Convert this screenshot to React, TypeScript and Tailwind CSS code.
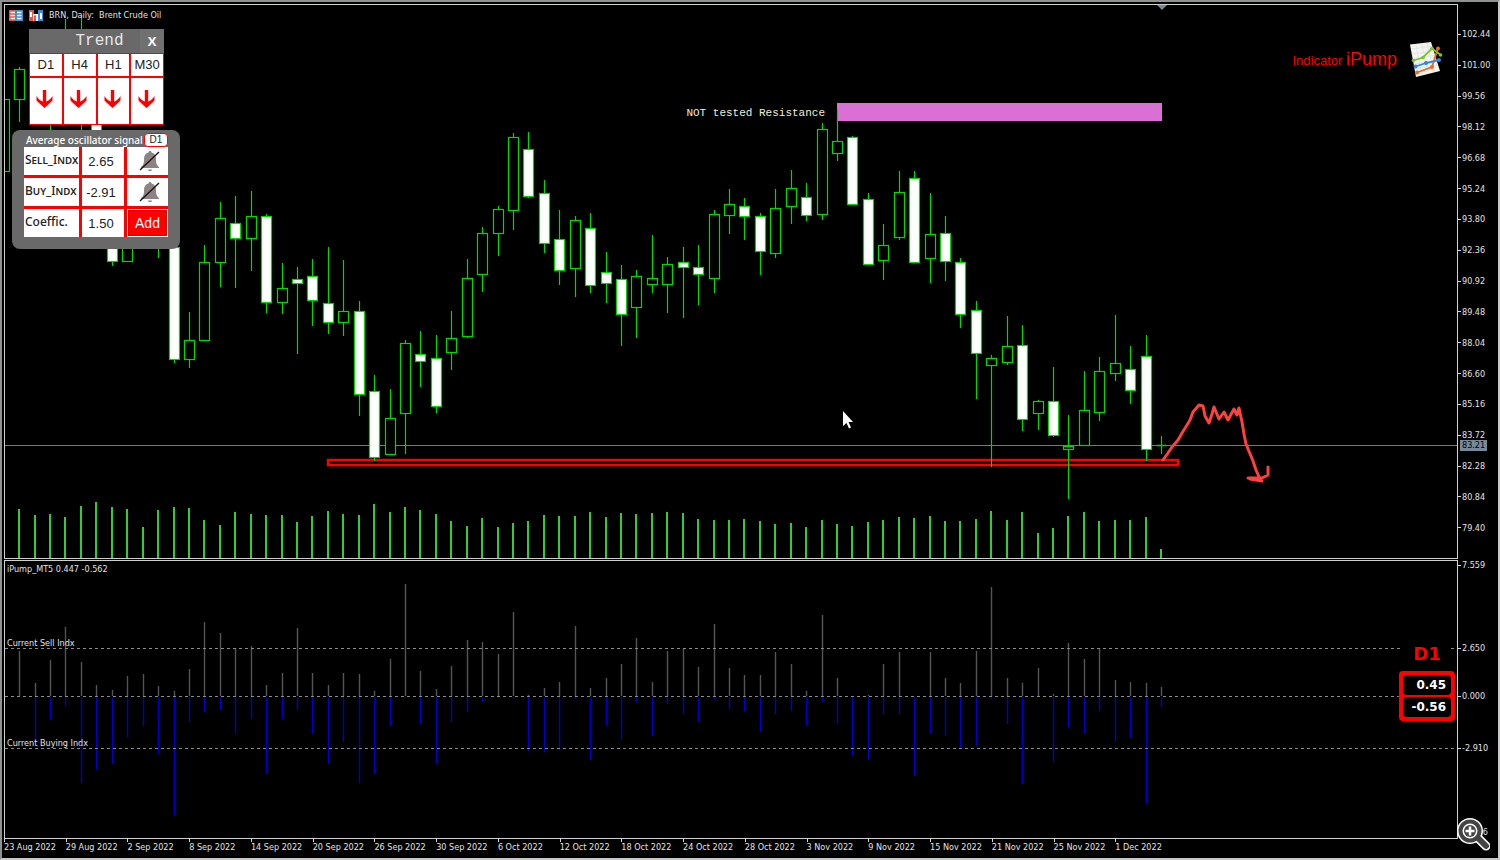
import { useState } from "react";

type Candle = {
  up: boolean;
  high: number;
  top: number;
  bottom: number;
  low: number;
};

const FIRST_X = 19.7;
const STEP = 15.43;

const barX = (i: number) => Math.floor(FIRST_X + i * STEP) + 0.5;

// [index, up, high, top, bottom, low]
const RAW: [number, number, number, number, number, number][] = [
  [-1, 1, 99, 99, 171, 171],
  [0, 1, 67, 69, 99, 122],
  [2, 1, 90, 95, 110, 130],
  [3, 1, 19, 60, 90, 110],
  [4, 0, 15, 60, 90, 131],
  [5, 0, 60, 70, 150, 160],
  [6, 0, 200, 210, 261, 266],
  [7, 1, 200, 210, 261, 261],
  [9, 1, 200, 210, 230, 258],
  [10, 0, 240, 247, 359, 363],
  [11, 1, 312, 340, 359, 368],
  [12, 1, 245, 262, 340, 341],
  [13, 1, 202, 218, 262, 287],
  [14, 0, 196, 223, 238, 288],
  [15, 1, 191, 216, 238, 271],
  [16, 0, 214, 216, 302, 313],
  [17, 1, 263, 288, 302, 314],
  [18, 0, 267, 279, 283, 354],
  [19, 0, 259, 276, 300, 326],
  [20, 0, 247, 303, 322, 334],
  [21, 1, 260, 311, 322, 336],
  [22, 0, 301, 311, 394, 416],
  [23, 0, 375, 391, 457, 461],
  [24, 1, 389, 418, 454, 455],
  [25, 1, 340, 343, 413, 454],
  [26, 0, 331, 354, 361, 387],
  [27, 0, 335, 358, 406, 413],
  [28, 1, 311, 338, 352, 370],
  [29, 1, 259, 278, 336, 338],
  [30, 1, 227, 233, 274, 292],
  [31, 1, 206, 209, 233, 256],
  [32, 1, 133, 137, 210, 230],
  [33, 0, 132, 149, 196, 198],
  [34, 0, 180, 193, 243, 253],
  [35, 0, 210, 239, 270, 285],
  [36, 1, 216, 220, 268, 297],
  [37, 0, 213, 228, 285, 293],
  [38, 0, 252, 272, 283, 303],
  [39, 0, 265, 279, 314, 346],
  [40, 1, 270, 276, 307, 338],
  [41, 1, 235, 278, 284, 293],
  [42, 1, 257, 264, 284, 313],
  [43, 0, 247, 262, 267, 318],
  [44, 0, 245, 267, 274, 305],
  [45, 1, 210, 214, 278, 293],
  [46, 1, 189, 204, 215, 234],
  [47, 0, 198, 206, 216, 240],
  [48, 0, 213, 216, 251, 275],
  [49, 1, 189, 208, 253, 258],
  [50, 1, 170, 188, 206, 224],
  [51, 0, 183, 197, 215, 221],
  [52, 1, 123, 129, 214, 220],
  [53, 1, 109, 141, 153, 161],
  [54, 0, 136, 137, 204, 205],
  [55, 0, 193, 199, 264, 265],
  [56, 1, 224, 245, 260, 280],
  [57, 1, 171, 192, 237, 240],
  [58, 0, 171, 178, 262, 263],
  [59, 1, 193, 234, 258, 283],
  [60, 0, 216, 233, 261, 281],
  [61, 0, 258, 262, 314, 328],
  [62, 0, 301, 310, 353, 399],
  [63, 1, 355, 358, 365, 467],
  [64, 1, 316, 346, 362, 365],
  [65, 0, 325, 345, 419, 431],
  [66, 1, 400, 401, 413, 430],
  [67, 0, 367, 401, 435, 437],
  [68, 1, 415, 446, 449, 499],
  [69, 1, 371, 410, 445, 446],
  [70, 1, 357, 371, 412, 421],
  [71, 1, 315, 363, 373, 381],
  [72, 0, 346, 369, 390, 404],
  [73, 0, 335, 356, 449, 461],
  [74, 1, 436, 445, 445, 454],
];

const CANDLES: [number, Candle][] = RAW.map(([i, up, high, top, bottom, low]) => [
  i,
  { up: up === 1, high, top, bottom, low },
]);

const VOLUMES = [
  509, 515, 514, 517, 506, 502, 507, 509, 527, 510, 507, 508, 520, 525, 512, 514, 515, 515, 522,
  516, 511, 514, 515, 504, 512, 507, 510, 514, 521, 526, 518, 527, 523, 521, 515, 516, 516, 512,
  517, 513, 514, 513, 512, 513, 519, 520, 520, 519, 521, 524, 523, 527, 520, 524, 526, 522, 520,
  517, 518, 516, 521, 521, 519, 511, 520, 512, 533, 528, 516, 512, 521, 520, 520, 517, 549,
];

const SELL = [
  651, 683, 660, 627, 662, 685, 690, 676, 674, 686, 691, 669, 622, 633, 648, 646, 685, 673, 628,
  673, 685, 673, 674, 691, 659, 584, 671, 689, 666, 640, 642, 654, 612, 695, 688, 682, 626, 688,
  678, 664, 638, 682, 651, 648, 667, 624, 668, 675, 675, 652, 664, 691, 615, 678, 696, 695, 664,
  652, 696, 652, 678, 683, 651, 587, 678, 683, 668, 694, 643, 659, 648, 680, 682, 683, 687,
];

const BUY = [
  698, 741, 719, 706, 783, 769, 764, 737, 726, 754, 815, 722, 712, 710, 733, 719, 774, 719, 710,
  734, 764, 742, 783, 774, 726, 698, 724, 764, 722, 712, 702, 698, 699, 751, 752, 750, 699, 760,
  725, 740, 702, 736, 704, 714, 722, 699, 709, 711, 731, 714, 711, 725, 701, 724, 755, 759, 714,
  714, 776, 733, 736, 749, 746, 699, 724, 784, 697, 762, 727, 733, 711, 742, 738, 804, 707,
];

const PRICES = [
  "102.44", "101.00", "99.56", "98.12", "96.68", "95.24", "93.80", "92.36", "90.92",
  "89.48", "88.04", "86.60", "85.16", "83.72", "82.28", "80.84", "79.40",
];

const LEVELS = ["7.559", "2.650", "0.000", "-2.910"];

const DATES = [
  "23 Aug 2022", "29 Aug 2022", "2 Sep 2022", "8 Sep 2022", "14 Sep 2022", "20 Sep 2022",
  "26 Sep 2022", "30 Sep 2022", "6 Oct 2022", "12 Oct 2022", "18 Oct 2022", "24 Oct 2022",
  "28 Oct 2022", "3 Nov 2022", "9 Nov 2022", "15 Nov 2022", "21 Nov 2022", "25 Nov 2022",
  "1 Dec 2022",
];

function PriceChart() {
  return (
    <svg className="absolute inset-0 h-full w-full" aria-label="BRN daily candles">
      <g transform="translate(-5 -5)">
        <path d="M1157 5h10l-5 5z" fill="#778899" />
        <rect x="5" y="445" width="100%" height="1" fill="#6c7b8a" />
        <rect x="837" y="103" width="325" height="18" fill="#da70d6" />
        <rect x="328" y="460" width="850" height="5" fill="#000" stroke="#f00" strokeWidth="2.500" />
        {VOLUMES.map((y, i) => (
          <rect key={i} x={barX(i) - 1.5} y={y} width="2" height={558 - y} fill="#32cd32" />
        ))}
        {CANDLES.map(([i, c]) => (
          <g key={i} stroke="#00d800">
            <line x1={barX(i)} x2={barX(i)} y1={c.high} y2={c.low} strokeWidth="1.200" />
            {c.top === c.bottom ? (
              <line
                x1={barX(i) - 5}
                x2={barX(i) + 5}
                y1={c.top + 0.5}
                y2={c.top + 0.5}
                strokeWidth="1.500"
              />
            ) : (
              <rect
                x={barX(i) - 5}
                y={c.top + 0.5}
                width="10"
                height={c.bottom - c.top}
                fill={c.up ? "#000" : "#fff"}
                strokeWidth="1.200"
              />
            )}
          </g>
        ))}
        <text x="825" y="116" textAnchor="end" fill="#eeeedd" className="font-['Liberation_Mono',monospace] text-[11px]">
          NOT tested Resistance
        </text>
        <path
          d="M1163 460L1168 453L1172 447L1178 440L1182 433L1187 425L1190 420L1193 412L1199 405L1203 406L1205 416L1209 423L1212 414L1214 407L1219 419L1224 412L1228 420L1234 409L1237 415L1239 408L1242 422L1244 434L1246 444L1253 461L1256 470L1260 479M1248 478H1262L1268 475V467M1250 479L1262 481"
          fill="none"
          stroke="#ff4040"
          strokeWidth="3"
          strokeLinecap="round"
          strokeLinejoin="round"
        />
        <path d="M843 411v15l3.500-3 2.500 5.500 2-1-2.500-5.500h4.500z" fill="#fff" />
      </g>
    </svg>
  );
}

function OscillatorChart() {
  return (
    <svg className="absolute inset-0 h-full w-full" aria-label="iPump histogram">
      <g transform="translate(-5 -561)" strokeWidth="1.400">
        {SELL.map((y, i) => (
          <line key={i} x1={barX(i)} x2={barX(i)} y1={y} y2="696" stroke="#555" />
        ))}
        {BUY.map((y, i) => (
          <line key={i} x1={barX(i)} x2={barX(i)} y1="697" y2={y} stroke="#0000d2" />
        ))}
      </g>
      {[87.5, 135.5, 187.5].map((y) => (
        <line key={y} x1="0" x2="100%" y1={y} y2={y} stroke="#8c8c8c" strokeDasharray="3 3" />
      ))}
    </svg>
  );
}

function DownArrow() {
  return (
    <svg width="17" height="20" viewBox="0 0 17 20" fill="#f00">
      <path d="M6.800 1h3.400v11.500c2.500-.8 4.500-2.500 6.300-5.500v4.500c-2 2.500-5 4.500-8 7.500-3-3-6-5-8-7.500V7c1.800 3 3.800 4.700 6.300 5.500z" />
    </svg>
  );
}

function BellOff() {
  return (
    <svg width="22" height="22" viewBox="0 0 22 22">
      <path
        d="M11 1c1 0 1.500.7 1.500 1.500C15.500 3.200 17 5.500 17 9c0 5 1 6.500 3 8v1H2v-1c2-1.500 3-3 3-8 0-3.500 1.500-5.800 4.500-6.500C9.500 1.700 10 1 11 1z"
        fill="#8f8282"
      />
      <path d="M9 19.500h4c0 1-.8 1.500-2 1.500s-2-.5-2-1.500z" fill="#8f8282" />
      <path d="M1 20L20 2" stroke="#111" strokeWidth="1.300" />
    </svg>
  );
}

function TrendPanel() {
  return (
    <section className="ml-[24px] w-[135px]">
      <header className="flex h-6 items-center bg-[#696969]">
        <h2 className="flex-1 pl-[30px] text-center font-['Liberation_Mono',monospace] text-[16px] leading-6 text-[#e6e6e6]">
          Trend
        </h2>
        <button className="h-6 w-6 bg-[#707070] font-['Open_Sans',sans-serif] text-[13px] font-bold leading-6 text-white">
          X
        </button>
      </header>
      <div className="grid grid-cols-4">
        {["D1", "H4", "H1", "M30"].map((tf) => (
          <button
            key={tf}
            className="h-6 border border-[#f00] bg-white font-['Liberation_Sans',sans-serif] text-[13px] text-[#222]"
          >
            {tf}
          </button>
        ))}
        {["D1", "H4", "H1", "M30"].map((tf) => (
          <div
            key={tf}
            className="flex h-12 items-center justify-center border border-[#f00] bg-white pb-1 pr-[2px]"
          >
            <DownArrow />
          </div>
        ))}
      </div>
    </section>
  );
}

const FIELDS = [
  { id: "sell", label: "Sell_Indx", value: "2.65", caps: true },
  { id: "buy", label: "Buy_Indx", value: "-2.91", caps: true },
  { id: "coef", label: "Coeffic.", value: "1.50", caps: false },
];

function SignalPanel() {
  const [values, setValues] = useState<Record<string, string>>(
    Object.fromEntries(FIELDS.map((f) => [f.id, f.value])),
  );

  return (
    <section className="ml-[7px] mt-[5px] w-[168px] rounded-lg bg-[#696969] px-3 pb-3 pt-[2px]">
      <header className="flex h-[15px] items-center justify-between pl-[2px]">
        <h2 className="whitespace-nowrap font-['Noto_Sans',sans-serif] text-[10px] font-medium text-white">
          Average oscillator signal
        </h2>
        <button className="h-[14px] w-6 rounded-sm border border-[#f00] bg-white font-['Liberation_Sans',sans-serif] text-[10px] leading-3 text-[#222]">
          D1
        </button>
      </header>
      <div className="flex flex-col gap-[3px] bg-[#f00]">
        {FIELDS.map((f) => (
          <div key={f.id} className="grid h-7 grid-cols-[55px_42px_41px] gap-[3px]">
            <label
              htmlFor={f.id}
              className={
                f.caps
                  ? "bg-white pl-px font-['Noto_Sans',sans-serif] text-[12px] font-medium leading-[26px] text-[#222] [font-variant:small-caps]"
                  : "bg-white pl-px font-['Noto_Sans',sans-serif] text-[12px] font-medium leading-[26px] text-[#222]"
              }
            >
              {f.label}
            </label>
            <input
              id={f.id}
              value={values[f.id]}
              onChange={(e) => setValues({ ...values, [f.id]: e.target.value })}
              className="w-full bg-white pr-1 text-center font-['Liberation_Sans',sans-serif] text-[13px] text-[#222] outline-none"
            />
            {f.id === "coef" ? (
              <div className="bg-white p-px">
                <button className="h-full w-full border border-[#d00] bg-[#f00] font-['Liberation_Sans',sans-serif] text-[14px] text-white">
                  Add
                </button>
              </div>
            ) : (
              <button className="flex items-center justify-center bg-white pl-1" aria-label={`${f.label} alert`}>
                <BellOff />
              </button>
            )}
          </div>
        ))}
      </div>
    </section>
  );
}

function ReportIcon() {
  return (
    <svg width="34" height="38" viewBox="0 0 34 38" fill="none">
      <path d="M1 3.500L22 1l9 29L7 36z" fill="#f4f4f0" />
      <path
        d="M3 8l20-3M4 13l21-3M5 18l22-4M6 23l22-4M7 28l22-4M7 4l6 30M13 3l6 29M18 2l7 29"
        stroke="#dcdcd6"
        strokeWidth=".6"
      />
      <path d="M8 31.500L23 26l6-19" stroke="#ee6a1f" strokeWidth="1.800" />
      <path d="M6.500 25.500L17 22l13-3" stroke="#2a86f0" strokeWidth="1.800" />
      <path d="M4.500 19.500L14 16.500l9-9 8 6" stroke="#7cc623" strokeWidth="1.800" />
      <g fill="#ee6a1f">
        <circle cx="8" cy="31.500" r="2" />
        <circle cx="23" cy="26" r="2" />
        <circle cx="29" cy="7.500" r="2" />
      </g>
      <g fill="#2a86f0">
        <circle cx="6.500" cy="25.500" r="2" />
        <circle cx="17" cy="22" r="2" />
        <circle cx="30" cy="19" r="2" />
      </g>
      <g fill="#7cc623">
        <circle cx="4.500" cy="19.500" r="1.800" />
        <circle cx="14" cy="16.500" r="1.800" />
        <circle cx="23" cy="7.500" r="1.800" />
        <circle cx="31.500" cy="14" r="1.800" />
      </g>
    </svg>
  );
}

function TitleIcons() {
  return (
    <>
      <svg width="14" height="11" viewBox="0 0 14 11">
        <path d="M0 0h7v11H0z" fill="#e0574c" />
        <path d="M7 0h7v11H7z" fill="#3f8fd0" />
        <path d="M1.500 2.500h4.500M1.500 5.500h4.500M1.500 8.500h4.500M8 2.500h4.500M8 5.500h4.500M8 8.500h4.500" stroke="#fff" strokeWidth="1.400" />
      </svg>
      <svg width="14" height="11" viewBox="0 0 14 11">
        <path d="M0 0h5v11H0z" fill="#e0574c" />
        <path d="M9 0h5v11H9z" fill="#3f8fd0" />
        <path d="M4 4h5v7H4z" fill="#f4f4f4" />
        <path d="M2 2v5M12 3v6" stroke="#fff" strokeWidth="2" />
        <path d="M5 5.500h2V11H5z" fill="#e0574c" />
      </svg>
    </>
  );
}

function AxisLabel({ text }: { text: string }) {
  return (
    <div className="flex items-center gap-px">
      <span className="h-px w-[3px] bg-[#d8d8d8]" />
      {text}
    </div>
  );
}

export default function App() {
  return (
    <main className="flex h-screen flex-col border-2 border-[#8f9390] border-b-[#c8c8c8] border-r-[#c8c8c8] bg-black pl-[2px] pt-[2px] font-['DejaVu_Sans_Condensed','DejaVu_Sans',sans-serif] text-[9px] leading-[10px] text-[#e2e2e2]">
      <div className="flex min-h-0 flex-1">
        <div className="relative flex flex-1 items-start justify-between overflow-hidden border border-[#d0d0d0]">
          <PriceChart />
          <div className="relative">
            <div className="flex h-6 items-center gap-[6px] pb-1 pl-1">
              <TitleIcons />
              <h1 className="whitespace-pre">BRN, Daily:  Brent Crude Oil</h1>
            </div>
            <TrendPanel />
            <SignalPanel />
          </div>
          <div className="relative flex items-center gap-3 pr-[14px] pt-9 font-['Liberation_Sans',sans-serif] text-[#f00]">
            <p className="text-[13px] leading-5">
              Indicator <span className="text-[18px]">iPump</span>
            </p>
            <ReportIcon />
          </div>
        </div>
        <div className="relative flex w-10 flex-col pb-4 pt-[15px]">
          {PRICES.map((p) => (
            <div key={p} className="flex flex-1 items-center">
              <AxisLabel text={p} />
            </div>
          ))}
          <span className="absolute left-[2px] top-[436px] bg-[#778899] px-[2px] leading-[11px] text-black">
            83.21
          </span>
        </div>
      </div>

      <div className="mt-px flex h-[279px]">
        <div className="relative flex flex-1 justify-between overflow-hidden border border-[#d0d0d0]">
          <OscillatorChart />
          <div className="relative grid grid-rows-[74px_100px_10px] content-start pl-[2px] pt-[3px]">
            <p>iPump_MT5 0.447 -0.562</p>
            <p>Current Sell Indx</p>
            <p>Current Buying Indx</p>
          </div>
          <div className="relative mr-[2px] mt-20 w-14 self-start font-['DejaVu_Sans',sans-serif] font-bold">
            <p className="mx-1 bg-black text-center text-[18px] leading-[26px] text-[#f00]">D1</p>
            <div className="mt-1 flex flex-col gap-[2px] rounded-sm border-4 border-[#f00] bg-[#f00] text-right text-[12px] leading-5 text-white">
              <p className="rounded-sm bg-black pr-[5px]">0.45</p>
              <p className="rounded-sm bg-black pr-[5px]">-0.56</p>
            </div>
          </div>
        </div>
        <div className="relative grid w-10 grid-rows-[83px_48px_52px_84px_10px] items-start">
          {LEVELS.map((l) => (
            <AxisLabel key={l} text={l} />
          ))}
          <p className="pr-[10px] text-right">6</p>
          <button className="absolute -bottom-3 -left-1" aria-label="Zoom in">
            <svg width="36" height="36" viewBox="0 0 36 36" fill="none">
              <path d="M24 23l8 8" stroke="#fff" strokeWidth="9" strokeLinecap="round" />
              <circle cx="16" cy="16" r="13" fill="#fff" />
              <path d="M24 23l8 8" stroke="#444" strokeWidth="6" strokeLinecap="round" />
              <circle cx="16" cy="16" r="9.500" fill="#fff" stroke="#444" strokeWidth="4" />
              <circle cx="16" cy="16" r="6" fill="#444" />
              <path d="M16 11.500v9M11.500 16h9" stroke="#fff" strokeWidth="2.500" />
            </svg>
          </button>
        </div>
      </div>

      <div className="grid h-[19px] w-[1173px] grid-cols-[repeat(19,minmax(0,1fr))]">
        {DATES.map((d) => (
          <div key={d} className="whitespace-nowrap">
            <span className="block h-[3px] w-px bg-[#d8d8d8]" />
            {d}
          </div>
        ))}
      </div>
    </main>
  );
}
